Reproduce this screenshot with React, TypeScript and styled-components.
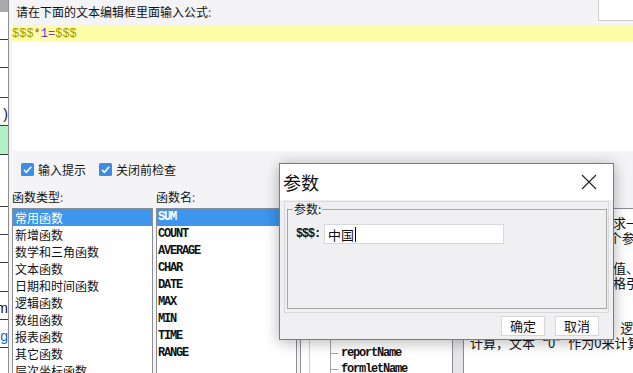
import React from 'react';
import styled, { createGlobalStyle } from 'styled-components';

const CJK = `'Noto Sans CJK SC', 'Noto Sans', sans-serif`;
const MONO = `'Liberation Mono', 'DejaVu Sans Mono', 'Noto Sans CJK SC', monospace`;

const GlobalStyle = createGlobalStyle`
  html, body {
    margin: 0;
    padding: 0;
    overflow: hidden;
    background: #f4f4f6;
  }
  body {
    font-family: ${CJK};
    font-size: 12px;
    color: #111;
  }
`;

const Screen = styled.div`
  position: relative;
  display: flex;
  width: 633px;
  height: 373px;
  overflow: hidden;
  background: #f4f4f6;
`;

/* spreadsheet peeking out on the left */
const SheetStrip = styled.div`
  flex-shrink: 0;
  display: flex;
  flex-direction: column;
  width: 8px;
  border-right: 1px solid #8e8e8e;
  background: #fff;
`;

const SheetCell = styled.div<{ $h: number; $bg?: string; $head?: boolean }>`
  box-sizing: border-box;
  flex-shrink: 0;
  display: flex;
  align-items: flex-end;
  justify-content: flex-end;
  height: ${(p) => p.$h}px;
  padding-bottom: 4px;
  overflow: hidden;
  white-space: nowrap;
  background: ${(p) => p.$bg || '#fff'};
  border-bottom: ${(p) => (p.$head ? 'none' : '1px solid #3c3c3c')};
  font-family: 'Liberation Sans', sans-serif;
  font-size: 14px;
  line-height: 14px;
`;

const SheetLink = styled.span`
  color: #1a5fd0;
  text-decoration: underline;
`;

const Main = styled.div`
  flex: 1;
  min-width: 0;
  display: flex;
  flex-direction: column;

  & > * {
    flex-shrink: 0;
  }
`;

const TopBar = styled.div`
  display: flex;
  align-items: flex-start;
  height: 26px;
`;

const Prompt = styled.div`
  padding-left: 7px;
  line-height: 24px;
  font-size: 12px;
`;

const Colon = styled.span`
  color: #8a3aa0;
`;

const CornerBox = styled.div`
  margin-left: auto;
  width: 34px;
  height: 20px;
  background: #fff;
  border-left: 1px solid #cdcdd2;
  border-bottom: 1px solid #cdcdd2;
`;

const Editor = styled.div`
  margin-left: 3px;
  height: 125px;
  background: #fff;
`;

const FormulaLine = styled.div`
  height: 16px;
  background: #fefea8;
  font-family: ${MONO};
  font-size: 12px;
  line-height: 16px;
`;

const Tok = styled.span<{ $c: string }>`
  color: ${(p) => p.$c};
`;

const OptionRow = styled.div`
  display: flex;
  align-items: center;
  gap: 13px;
  height: 21px;
  margin-top: 8px;
  padding-left: 12px;
`;

const CheckItem = styled.label`
  display: flex;
  align-items: center;
  gap: 4px;
  font-size: 12px;
`;

const ListsArea = styled.div`
  display: flex;
  align-items: flex-start;
  margin-top: 9px;
  padding-left: 3px;
`;

const Column = styled.div<{ $w: number; $ml?: number }>`
  flex-shrink: 0;
  display: flex;
  flex-direction: column;
  width: ${(p) => p.$w}px;
  margin-left: ${(p) => p.$ml || 0}px;
`;

const ColLabel = styled.div`
  height: 16px;
  margin-bottom: 3px;
  line-height: 16px;
  font-size: 12px;
  white-space: nowrap;
`;

const ListBox = styled.div`
  box-sizing: border-box;
  flex-shrink: 0;
  height: 180px;
  overflow: hidden;
  background: #fff;
  border: 1px solid #8a8d94;
`;

const TypeItem = styled.div<{ $sel?: boolean }>`
  height: 17px;
  padding-left: 2px;
  line-height: 17px;
  font-size: 12px;
  white-space: nowrap;
  background: ${(p) => (p.$sel ? '#3d95ec' : 'transparent')};
  color: ${(p) => (p.$sel ? '#fff' : '#111')};
`;

const FuncItem = styled(TypeItem)`
  padding-left: 1px;
  font-family: ${MONO};
  font-weight: bold;
  letter-spacing: -1.2px;
`;

const TreeBox = styled(ListBox)`
  padding-top: 8px;
`;

const TreeRootGroup = styled.div`
  margin-left: 8px;
  border-left: 1px solid #cfcfcf;
`;

const TreeChildGroup = styled.div`
  margin-left: 20px;
  border-left: 1px solid #a6a6a6;
`;

const TreeRow = styled.div`
  display: flex;
  align-items: center;
  height: 16px;
  font-family: ${MONO};
  font-size: 12px;
  font-weight: bold;
  letter-spacing: -1.2px;
  white-space: nowrap;
`;

const TreeStub = styled.span<{ $w: number }>`
  width: ${(p) => p.$w}px;
  margin-right: 3px;
  border-top: 1px solid #a6a6a6;
`;

const Splitter = styled.div`
  flex-shrink: 0;
  width: 10px;
  height: 180px;
  margin-top: 19px;
  background: #e6e6e8;
`;

const DescBox = styled(ListBox)`
  width: 176px;
  padding: 6px 0 0 6px;
`;

const DescLine = styled.div`
  height: 15px;
  line-height: 15px;
  font-size: 13px;
  white-space: nowrap;
`;

/* the modal dialog on top */
const Dialog = styled.div`
  position: absolute;
  left: 279px;
  top: 163px;
  box-sizing: border-box;
  width: 335px;
  display: flex;
  flex-direction: column;
  background: #f0f0f2;
  border: 1px solid #7c7c7c;
  box-shadow: 0 2px 14px rgba(0, 0, 0, 0.3);
`;

const DialogTitleBar = styled.div`
  display: flex;
  align-items: center;
  justify-content: space-between;
  height: 36px;
  padding: 0 16px 0 3px;
  background: #fff;
`;

const DialogTitle = styled.div`
  font-size: 18px;
  line-height: 36px;
`;

const DialogFrame = styled.div`
  box-sizing: border-box;
  height: 112px;
  margin: 1px 4px 0;
  padding: 0 1px 3px 2px;
  border: 1px solid #d9d9dc;
`;

const GroupBox = styled.fieldset`
  box-sizing: border-box;
  height: 100%;
  margin: 0;
  padding: 0 5px;
  border: 1px solid #a8a8a2;
`;

const GroupLegend = styled.legend`
  padding: 0 1px;
  font-size: 12px;
  line-height: 14px;
`;

const ParamRow = styled.div`
  display: flex;
  align-items: center;
  gap: 4px;
  margin: 8px 0 0 3px;
`;

const ParamLabel = styled.span`
  width: 24px;
  font-family: ${MONO};
  font-size: 12px;
  font-weight: bold;
  letter-spacing: -1.2px;
`;

const ParamInput = styled.div`
  box-sizing: border-box;
  display: flex;
  align-items: center;
  width: 180px;
  height: 20px;
  padding-left: 3px;
  background: #fff;
  border: 1px solid #d8d8da;
  font-size: 13px;
`;

const Caret = styled.span`
  width: 1px;
  height: 15px;
  margin-left: 1px;
  background: #000;
`;

const ButtonRow = styled.div`
  display: flex;
  justify-content: flex-end;
  gap: 10px;
  padding: 3px 14px 3px 0;
`;

const DialogButton = styled.button<{ $w: number }>`
  box-sizing: border-box;
  width: ${(p) => p.$w}px;
  height: 20px;
  padding: 0;
  background: #fff;
  border: 1px solid #d6d6d8;
  font-family: ${CJK};
  font-size: 13px;
  line-height: 18px;
  color: #111;
`;

const CheckIcon = () => (
  <svg width="13" height="13" viewBox="0 0 13 13">
    <rect width="13" height="13" rx="1.5" fill="#3c8de6" />
    <path d="M3 6.9L5.4 9.3L10.2 3.8" fill="none" stroke="#fff" strokeWidth="1.6" />
  </svg>
);

const CloseIcon = () => (
  <svg width="16" height="16" viewBox="0 0 16 16">
    <path d="M1 1L15 15M15 1L1 15" stroke="#1e1e1e" strokeWidth="1.1" />
  </svg>
);

const sheetCells = [
  { h: 12, bg: '#aaaaaa', head: true },
  { h: 28 },
  { h: 28 },
  { h: 30 },
  { h: 28, text: ')' },
  { h: 29, bg: '#b3f0c6' },
  { h: 52 },
  { h: 28 },
  { h: 28 },
  { h: 29 },
  { h: 28, text: 'm' },
  { h: 28, link: 'g' },
  { h: 28 },
];

const functionTypes = [
  '常用函数',
  '新增函数',
  '数学和三角函数',
  '文本函数',
  '日期和时间函数',
  '逻辑函数',
  '数组函数',
  '报表函数',
  '其它函数',
  '层次坐标函数',
];

const functionNames = ['SUM', 'COUNT', 'AVERAGE', 'CHAR', 'DATE', 'MAX', 'MIN', 'TIME', 'RANGE'];

const treeChildren = ['NULL', 'TODAY', 'NOW', 'USER', 'ROLE', 'SERVER', 'NOFILTER', 'reportName', 'formletName', 'sessionID'];

const descLines = [
  '功能说明：此函数可用于求一组数值的和。',
  '数值的和，最多有1到30个参数。',
  '',
  '各参数可以是数字、逻辑值、文本',
  '或者是包含有数字的单元格引用。',
  '空值将被忽略。',
  '如果参数是文本，',
  '若参数是1个数组或引用，逻辑值',
  '计算，文本“0”作为0来计算。',
];

const App: React.FC = () => {
  return (
    <Screen>
      <GlobalStyle />
      <SheetStrip>
        {sheetCells.map((cell, i) => (
          <SheetCell key={i} $h={cell.h} $bg={cell.bg} $head={cell.head}>
            {cell.text}
            {cell.link && <SheetLink>{cell.link}</SheetLink>}
          </SheetCell>
        ))}
      </SheetStrip>

      <Main>
        <TopBar>
          <Prompt>
            请在下面的文本编辑框里面输入公式<Colon>:</Colon>
          </Prompt>
          <CornerBox />
        </TopBar>

        <Editor>
          <FormulaLine>
            <Tok $c="#a09a00">$$$</Tok>
            <Tok $c="#b0453a">*</Tok>
            <Tok $c="#6b2fd0">1</Tok>
            <Tok $c="#8a3aa0">=</Tok>
            <Tok $c="#a09a00">$$$</Tok>
          </FormulaLine>
        </Editor>

        <OptionRow>
          <CheckItem>
            <CheckIcon />
            输入提示
          </CheckItem>
          <CheckItem>
            <CheckIcon />
            关闭前检查
          </CheckItem>
        </OptionRow>

        <ListsArea>
          <Column $w={141}>
            <ColLabel>
              函数类型<Colon>:</Colon>
            </ColLabel>
            <ListBox>
              {functionTypes.map((t, i) => (
                <TypeItem key={t} $sel={i === 0}>
                  {t}
                </TypeItem>
              ))}
            </ListBox>
          </Column>

          <Column $w={141} $ml={3}>
            <ColLabel>
              函数名<Colon>:</Colon>
            </ColLabel>
            <ListBox>
              {functionNames.map((n, i) => (
                <FuncItem key={n} $sel={i === 0}>
                  {n}
                </FuncItem>
              ))}
            </ListBox>
          </Column>

          <Column $w={153} $ml={3}>
            <ColLabel>
              参数<Colon>:</Colon>
            </ColLabel>
            <TreeBox>
              <TreeRootGroup>
                <TreeRow>
                  <TreeStub $w={8} />
                  系统参数
                </TreeRow>
                <TreeChildGroup>
                  {treeChildren.map((c) => (
                    <TreeRow key={c}>
                      <TreeStub $w={7} />
                      {c}
                    </TreeRow>
                  ))}
                </TreeChildGroup>
              </TreeRootGroup>
            </TreeBox>
          </Column>

          <Splitter />

          <Column $w={176}>
            <ColLabel>
              函数说明<Colon>:</Colon>
            </ColLabel>
            <DescBox>
              {descLines.map((line, i) => (
                <DescLine key={i}>{line}</DescLine>
              ))}
            </DescBox>
          </Column>
        </ListsArea>
      </Main>

      <Dialog>
        <DialogTitleBar>
          <DialogTitle>参数</DialogTitle>
          <CloseIcon />
        </DialogTitleBar>
        <DialogFrame>
          <GroupBox>
            <GroupLegend>参数:</GroupLegend>
            <ParamRow>
              <ParamLabel>$$$:</ParamLabel>
              <ParamInput>
                中国
                <Caret />
              </ParamInput>
            </ParamRow>
          </GroupBox>
        </DialogFrame>
        <ButtonRow>
          <DialogButton $w={44}>确定</DialogButton>
          <DialogButton $w={44}>取消</DialogButton>
        </ButtonRow>
      </Dialog>
    </Screen>
  );
};

export default App;
